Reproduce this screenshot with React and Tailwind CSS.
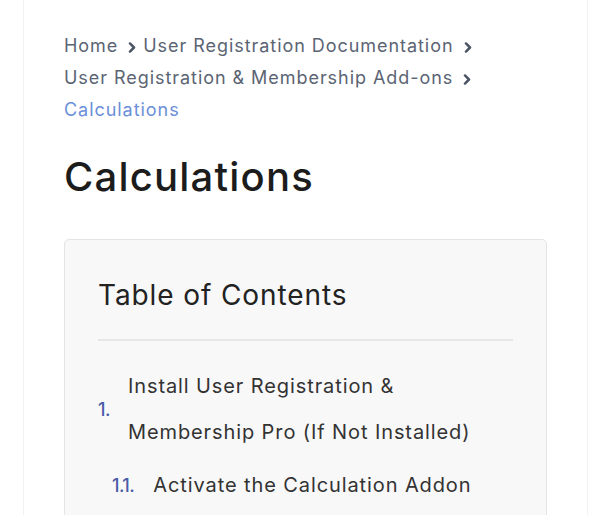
const crumbs = [
  'Home',
  'User Registration Documentation',
  'User Registration & Membership Add-ons',
];

function Sep() {
  return (
    <svg
      viewBox="0 0 8 12"
      className="inline-block w-[8px] h-[11px] ml-[10px] mr-[7px] text-[#4b5565]"
      fill="none"
      stroke="currentColor"
      strokeWidth="2.7"
      strokeLinecap="round"
      strokeLinejoin="round"
    >
      <path d="M1.8 1.6 L6.2 6 L1.8 10.4" />
    </svg>
  );
}

export default function App() {
  return (
    <div className="min-h-screen bg-white" style={{ fontFamily: 'Inter, "Liberation Sans", sans-serif' }}>
      <div className="ml-[23px] mr-[12px] min-h-[515px] border-x border-[#f2f2f2] px-[40px] pt-[30px]">
        <nav className="text-[18px] leading-[32px] tracking-[0.95px] text-[#5b6473]">
          {crumbs.map((c) => (
            <span key={c}>
              {c}
              <Sep />
              {c === 'User Registration Documentation' && <br />}
            </span>
          ))}
          <br />
          <span className="text-[#6b8fd8]">Calculations</span>
        </nav>

        <h1 className="mt-[27px] text-[40px] leading-[48px] font-medium text-[#1c1c1c] tracking-[1.2px]">
          Calculations
        </h1>

        <div className="mt-[38px] rounded-[5px] border border-[#e4e4e4] bg-[#f8f8f8] px-[33px] pt-[38px] pb-[30px]">
          <h2 className="text-[28px] leading-[34px] tracking-[0.9px] text-[#222]">Table of Contents</h2>
          <hr className="mt-[27px] border-t-2 border-[#e6e6e6]" />

          <ol className="mt-[22px] tracking-[0.9px]">
            <li className="flex items-center gap-[18px]">
              <span className="text-[18px] font-medium tracking-[-0.5px] text-[#4a5ca8]">1.</span>
              <span className="text-[20px] leading-[46px] text-[#333]">
                Install User Registration &amp;
                <br />
                Membership Pro (If Not Installed)
              </span>
            </li>
            <li className="mt-[7px] ml-[14px] flex items-center gap-[19px]">
              <span className="text-[18px] font-medium tracking-[-0.5px] text-[#4a5ca8]">1.1.</span>
              <span className="text-[20px] leading-[46px] text-[#333]">Activate the Calculation Addon</span>
            </li>
          </ol>
        </div>
      </div>
    </div>
  );
}
